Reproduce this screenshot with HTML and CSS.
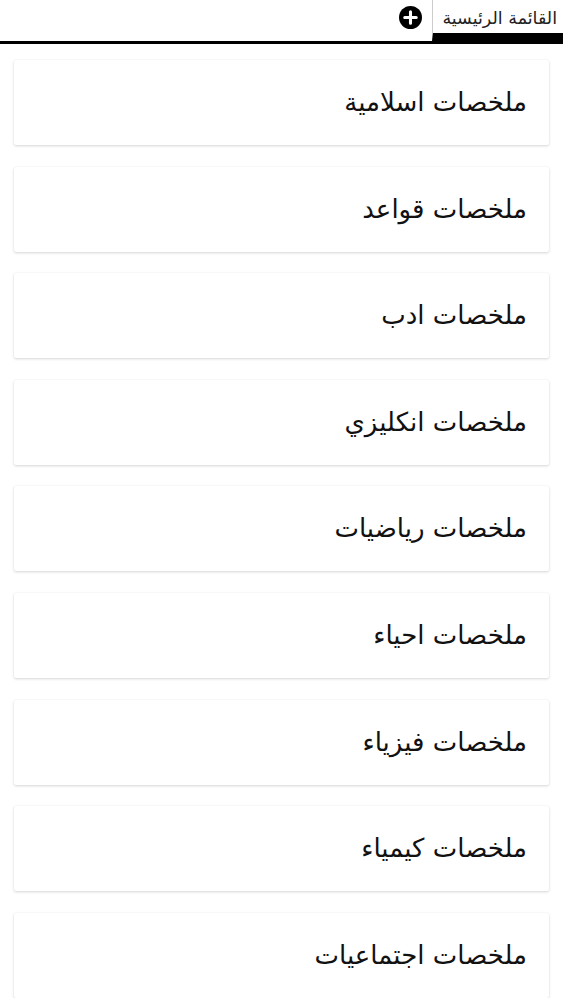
FILE: index.html
```html
<!DOCTYPE html>
<html lang="ar" dir="rtl">
<head>
  <meta charset="UTF-8">
  <meta name="viewport" content="width=device-width, initial-scale=1.0">
  <title>القائمة الرئيسية</title>
  <link rel="stylesheet" href="styles.css">
</head>
<body>
  <!-- tab bar -->
  <div class="tabs">
    <div class="tab active">القائمة الرئيسية</div>
    <div class="add">
      <svg width="23" height="23" viewBox="0 0 24 24">
        <circle cx="12" cy="12" r="12" fill="#000"/>
        <path d="M12 6v12M6 12h12" stroke="#fff" stroke-width="3.2" stroke-linecap="round"/>
      </svg>
    </div>
  </div>

  <div class="list">
    <div class="card">ملخصات اسلامية</div>
    <div class="card">ملخصات قواعد</div>
    <div class="card">ملخصات ادب</div>
    <div class="card">ملخصات انكليزي</div>
    <div class="card">ملخصات رياضيات</div>
    <div class="card">ملخصات احياء</div>
    <div class="card">ملخصات فيزياء</div>
    <div class="card">ملخصات كيمياء</div>
    <div class="card">ملخصات اجتماعيات</div>
  </div>
</body>
</html>
```
FILE: styles.css
```css
body {
  margin: 0;
  background: #fff;
  font-family: "DejaVu Sans", "Noto Sans", sans-serif;
  color: #111;
}

.tabs {
  display: flex;
  align-items: flex-start;
  height: 41px;
  border-bottom: 3px solid #000;
}

.tab {
  height: 33px;
  padding: 0 6px 0 9px;
  border-left: 1px solid #ccc;
  border-bottom: 8px solid #000;
  font-size: 17.5px;
  line-height: 36px;
  color: #222;
}

.add {
  padding: 6px 10px 0 0;
}

.add svg { display: block; }

.list {
  display: flex;
  flex-direction: column;
  gap: 21.6px;
  padding: 16px 14px 0 14px;
}

.card {
  height: 85px;
  line-height: 84px;
  padding: 0 22px 0 0;
  font-size: 26px;
  background: #fff;
  border-radius: 2px;
  box-shadow: 0 1px 3px rgba(0,0,0,0.16), 0 0 1px rgba(0,0,0,0.08);
}
```
